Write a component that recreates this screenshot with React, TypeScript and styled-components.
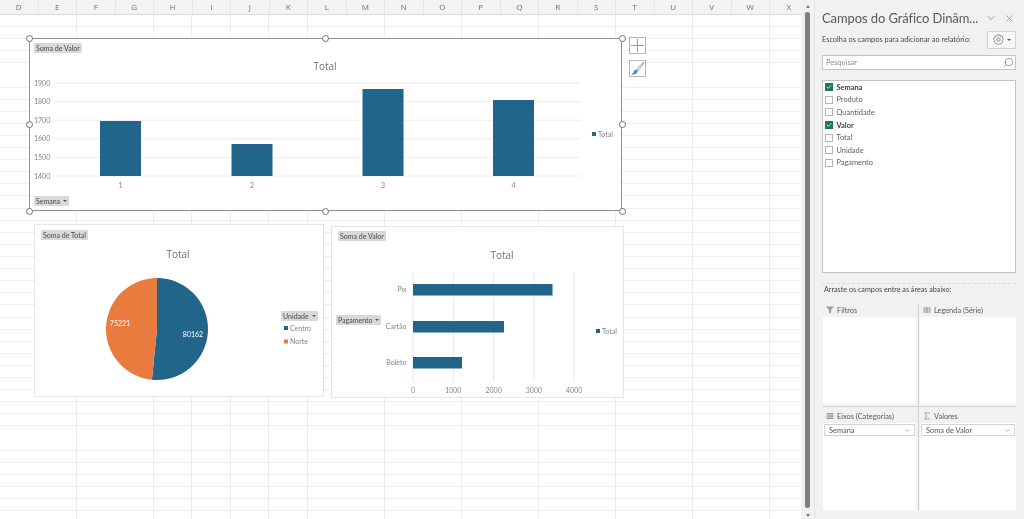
import * as React from "react";
import styled, { createGlobalStyle } from "styled-components";
import { ChevronDown, X, Search, Check } from "lucide-react";

const COLUMNS = "DEFGHIJKLMNOPQRSTUVWX".split("");
const FIELDS = [
  { name: "Semana", checked: true },
  { name: "Produto", checked: false },
  { name: "Quantidade", checked: false },
  { name: "Valor", checked: true },
  { name: "Total", checked: false },
  { name: "Unidade", checked: false },
  { name: "Pagamento", checked: false },
];
const BLUE = "#21668a";
const ORANGE = "#e97b3f";

const GlobalStyle = createGlobalStyle`
  html, body { margin: 0; padding: 0; background: #fff; }
  body { font-family: "Lato", "Open Sans", "Liberation Sans", sans-serif; overflow: hidden; }
`;

const Shell = styled.div`
  width: 1024px;
  height: 519px;
  display: flex;
  overflow: hidden;
  filter: blur(0.4px);
`;

const SheetArea = styled.div`
  width: 801px;
  display: flex;
  flex-direction: column;
`;

const ColumnBar = styled.div`
  height: 14px;
  display: flex;
  background: #f3f3f3;
  border-bottom: 1px solid #dcdcdc;
`;

const ColumnHead = styled.div`
  width: 38.5px;
  flex: none;
  text-align: center;
  font-family: "Open Sans", sans-serif;
  font-size: 8px;
  line-height: 14px;
  color: #6e6e6e;
  border-right: 1px solid #e6e6e6;
  box-sizing: border-box;
`;

const Grid = styled.div`
  flex: 1;
  position: relative;
  background-color: #fff;
  background-image:
    repeating-linear-gradient(to right, transparent 0 37.5px, #ededed 37.5px 38.5px),
    repeating-linear-gradient(to bottom, transparent 0 11.1px, #ededed 11.1px 12.1px);
`;

const ChartFrame = styled.div<{ $x: number; $y: number; $w: number; $h: number; $selected?: boolean }>`
  position: absolute;
  left: ${(p) => p.$x}px;
  top: ${(p) => p.$y - 15}px;
  width: ${(p) => p.$w}px;
  height: ${(p) => p.$h}px;
  background: #fff;
  box-sizing: border-box;
  border: ${(p) => (p.$selected ? "1.5px solid #8f8f8f" : "1px solid #e6e6e6")};
`;

const Plot = styled.svg`
  position: absolute;
  left: -1px;
  top: -1px;
  overflow: visible;
`;

const Title = styled.text`
  font-family: "Open Sans", "Noto Sans", sans-serif;
  font-size: 10px;
  font-weight: 500;
  fill: #6f6f6f;
  text-anchor: middle;
`;

const AxisLabel = styled.text<{ $anchor?: string }>`
  font-family: "Lato", "Open Sans", sans-serif;
  font-size: 7px;
  fill: #858585;
  text-anchor: ${(p) => p.$anchor || "middle"};
`;

const SliceLabel = styled.text`
  font-family: "Lato", "Open Sans", sans-serif;
  font-size: 7px;
  fill: #fff;
  text-anchor: middle;
`;

const PivotButton = styled.div<{ $x: number; $y: number }>`
  position: absolute;
  left: ${(p) => p.$x}px;
  top: ${(p) => p.$y}px;
  height: 10px;
  padding: 0 2px;
  display: flex;
  align-items: center;
  gap: 3px;
  background: #d9d9d9;
  color: #4a4a4a;
  font-family: "Lato", "Open Sans", sans-serif;
  font-size: 7px;
  line-height: 10px;
  white-space: nowrap;
`;

const Caret = styled.span`
  width: 0;
  height: 0;
  border-left: 2px solid transparent;
  border-right: 2px solid transparent;
  border-top: 2.5px solid #555;
`;

const Handle = styled.span<{ $x: number; $y: number }>`
  position: absolute;
  left: ${(p) => p.$x - 3.5}px;
  top: ${(p) => p.$y - 3.5}px;
  width: 7px;
  height: 7px;
  box-sizing: border-box;
  border-radius: 50%;
  background: #fff;
  border: 1.5px solid #707070;
`;

const ChartTool = styled.div<{ $y: number }>`
  position: absolute;
  left: 629px;
  top: ${(p) => p.$y}px;
  width: 17px;
  height: 17px;
  box-sizing: border-box;
  background: #fff;
  border: 1px solid #b5b5b5;
  display: flex;
  align-items: center;
  justify-content: center;
`;

const Scrollbar = styled.div`
  width: 13px;
  background: #f1f1f1;
  display: flex;
  flex-direction: column;
  align-items: center;
  padding: 5px 3px 0 3px;
  box-sizing: border-box;
`;

const ScrollArrow = styled.span<{ $down?: boolean }>`
  width: 0;
  height: 0;
  border-left: 2.5px solid transparent;
  border-right: 2.5px solid transparent;
  ${(p) => (p.$down ? "border-top: 3px solid #777;" : "border-bottom: 3px solid #777;")}
`;

const ScrollThumb = styled.div`
  width: 5px;
  height: 496px;
  margin: 4px 0 6px;
  background: #7f7f7f;
  border-radius: 2px;
`;

const Panel = styled.aside`
  width: 210px;
  box-sizing: border-box;
  background: #f1f1f1;
  border-left: 1px solid #e2e2e2;
  padding: 7px 8px 9px 7px;
  display: flex;
  flex-direction: column;
`;

const PanelHeader = styled.div`
  height: 22px;
  display: flex;
  align-items: center;
  justify-content: space-between;
  color: #666;
`;

const PanelTitle = styled.h1`
  margin: 0;
  font-size: 13px;
  font-weight: 400;
  letter-spacing: -0.1px;
  color: #595959;
  white-space: nowrap;
`;

const HeaderIcons = styled.div`
  display: flex;
  gap: 7px;
  align-items: center;
  margin-right: 1px;
`;

const ChooseRow = styled.div`
  height: 19px;
  margin-top: 1px;
  display: flex;
  align-items: center;
  justify-content: space-between;
`;

const SmallText = styled.span`
  font-size: 7.4px;
  font-weight: 400;
  color: #484848;
  white-space: nowrap;
`;

const GearButton = styled.div`
  width: 29px;
  height: 18px;
  box-sizing: border-box;
  background: #f7f7f7;
  border: 1px solid #d2d2d2;
  display: flex;
  align-items: center;
  justify-content: center;
  gap: 3px;
`;

const SearchBox = styled.div`
  height: 15px;
  margin-top: 6px;
  padding: 0 1px 0 3px;
  background: #fff;
  border: 1px solid #c4c4c4;
  box-sizing: border-box;
  display: flex;
  align-items: center;
  justify-content: space-between;
  font-size: 7.4px;
  color: #8a8a8a;
`;

const FieldList = styled.ul`
  list-style: none;
  margin: 10px 0 0;
  padding: 0 2px;
  height: 193px;
  box-sizing: border-box;
  background: #fff;
  border: 1px solid #c4c4c4;
`;

const FieldRow = styled.li<{ $checked: boolean }>`
  height: 12.6px;
  display: flex;
  align-items: center;
  gap: 3.5px;
  font-size: 7.4px;
  font-weight: ${(p) => (p.$checked ? 700 : 400)};
  color: ${(p) => (p.$checked ? "#3c3c3c" : "#5e5e5e")};
`;

const CheckBox = styled.span<{ $checked: boolean }>`
  width: 8px;
  height: 8px;
  flex: none;
  box-sizing: border-box;
  display: flex;
  align-items: center;
  justify-content: center;
  background: ${(p) => (p.$checked ? "#217a4e" : "#fff")};
  border: 1px solid ${(p) => (p.$checked ? "#217a4e" : "#b4b4b4")};
`;

const DashedRule = styled.div`
  margin-top: 10px;
  border-top: 1px dashed #dcdcdc;
`;

const DragHint = styled(SmallText)`
  margin: 0 0 0 2px;
  font-size: 7.2px;
  line-height: 12px;
`;

const Areas = styled.div`
  margin: 8px 0 0 1px;
  display: grid;
  grid-template-columns: 95px 98px;
  grid-template-rows: 102px 1fr;
  flex: 1;
`;

const AreaCell = styled.section<{ $right?: boolean; $lower?: boolean }>`
  display: flex;
  flex-direction: column;
  box-sizing: border-box;
  min-height: 0;
  padding-bottom: ${(p) => (p.$lower ? 0 : 2)}px;
  ${(p) => (p.$right ? "padding-left: 1px; border-left: 1px solid #d4d4d4;" : "padding-right: 2px;")}
  ${(p) => (p.$lower ? "border-top: 1px solid #d4d4d4; padding-top: 3px;" : "")}
`;

const AreaHeading = styled.div`
  height: 12px;
  flex: none;
  display: flex;
  align-items: center;
  gap: 3px;
  padding-left: 3px;
  font-size: 7.4px;
  color: #5a5a5a;
  white-space: nowrap;
`;

const AreaBody = styled.div`
  flex: 1;
  background: #fff;
  margin-top: 1px;
  padding: 1px 1px 0;
`;

const AreaPill = styled.div`
  height: 12px;
  box-sizing: border-box;
  padding: 0 3px 0 4px;
  background: #fff;
  border: 1px solid #d4d4d4;
  display: flex;
  align-items: center;
  justify-content: space-between;
  font-size: 7.4px;
  color: #555;
`;

const AreaIcon = styled.svg`
  width: 8px;
  height: 8px;
  flex: none;
  color: #9a9a9a;
`;

const FilterIcon = () => (
  <AreaIcon viewBox="0 0 8 8"><path d="M0 .5h8L5 4v3.5L3 6.5V4z" fill="currentColor" /></AreaIcon>
);
const LegendIcon = () => (
  <AreaIcon viewBox="0 0 8 8"><path d="M.5 1h2v6h-2zM3 1h2v6H3zM5.500 1h2v6h-2z" fill="currentColor" opacity=".75" /></AreaIcon>
);
const RowsIcon = () => (
  <AreaIcon viewBox="0 0 8 8"><path d="M.5 1h7v1.500h-7zM.5 3.200h7v1.500h-7zM.5 5.400h7v1.500h-7z" fill="currentColor" /></AreaIcon>
);
const SigmaIcon = () => (
  <AreaIcon viewBox="0 0 8 8"><path d="M6.500 1.500V1h-5l2.500 3-2.500 3h5v-.5" fill="none" stroke="currentColor" strokeWidth=".9" /></AreaIcon>
);

const GearIcon = () => (
  <svg width="11" height="11" viewBox="0 0 12 12" fill="none" stroke="#777" strokeWidth=".9">
    <path d="M4.400 1h3.200l.6 1.500 1.600-.2 1.500 3.700-1.100 1.100.5 1.500L8.500 10.700H7L6 11.500 5 10.700H3.500L1.300 8.600l.5-1.500L.7 6l1.500-3.700 1.600.2z" />
    <circle cx="6" cy="6" r="1.900" />
  </svg>
);

const BrushIcon = () => (
  <svg width="15" height="15" viewBox="0 0 15 15">
    <path d="M13.500 1 6.500 8.500l1.500 1.500L14 2z" fill="#fff" stroke="#8a8a8a" strokeWidth=".8" />
    <path d="M6 8.500c-2 .3-2 2.500-3 3.500L1 13.500c2.500.5 5.500 0 6.800-3.300z" fill="#4a90c8" />
  </svg>
);

const PlusIcon = () => (
  <svg width="13" height="13" viewBox="0 0 13 13">
    <path d="M6.500 0v13M0 6.500h13" stroke="#7fae94" strokeWidth="1" />
  </svg>
);

function ChartPlot({ w, h, children }: { w: number; h: number; children: React.ReactNode }) {
  return (
    <Plot width={w} height={h} viewBox={`0 0 ${w} ${h}`}>
      {children}
    </Plot>
  );
}

function ColumnChart() {
  const w = 593;
  const h = 173;
  const ticks = [1900, 1800, 1700, 1600, 1500, 1400];
  const bars = [
    { label: "1", x: 71, top: 83 },
    { label: "2", x: 202.5, top: 106 },
    { label: "3", x: 333.5, top: 51 },
    { label: "4", x: 464, top: 62 },
  ];
  return (
    <ChartPlot w={w} h={h}>
      <Title x={296} y={32}>Total</Title>
      {ticks.map((t, i) => {
        const y = 45 + i * 18.6;
        return (
          <g key={t}>
            <line x1={26} x2={551} y1={y} y2={y} stroke="#ececec" />
            <AxisLabel x={5} y={y + 2.5} $anchor="start">{t}</AxisLabel>
          </g>
        );
      })}
      {bars.map((b) => (
        <g key={b.label}>
          <rect x={b.x} y={b.top} width={41} height={138 - b.top} fill={BLUE} />
          <AxisLabel x={b.x + 20.5} y={149.5}>{b.label}</AxisLabel>
        </g>
      ))}
      <rect x={563} y={94} width={4} height={4} fill={BLUE} />
      <AxisLabel x={569} y={98.5} $anchor="start">Total</AxisLabel>
    </ChartPlot>
  );
}

function PieChart() {
  const w = 290;
  const h = 173;
  const cx = 123;
  const cy = 105;
  const r = 51;
  const blue = 80162 / (80162 + 75221);
  const angle = blue * Math.PI * 2;
  const ex = cx + r * Math.sin(angle);
  const ey = cy - r * Math.cos(angle);
  return (
    <ChartPlot w={w} h={h}>
      <Title x={144} y={34}>Total</Title>
      <path d={`M${cx} ${cy}L${cx} ${cy - r}A${r} ${r} 0 1 1 ${ex} ${ey}Z`} fill={BLUE} />
      <path d={`M${cx} ${cy}L${ex} ${ey}A${r} ${r} 0 0 1 ${cx} ${cy - r}Z`} fill={ORANGE} />
      <SliceLabel x={86} y={102}>75221</SliceLabel>
      <SliceLabel x={159} y={113}>80162</SliceLabel>
      <rect x={250} y={102} width={4} height={4} fill={BLUE} />
      <AxisLabel x={256} y={106.500} $anchor="start">Centro</AxisLabel>
      <rect x={250} y={115.500} width={4} height={4} fill={ORANGE} />
      <AxisLabel x={256} y={120} $anchor="start">Norte</AxisLabel>
    </ChartPlot>
  );
}

function BarChart() {
  const w = 293;
  const h = 172;
  const ticks = [0, 1000, 2000, 3000, 4000];
  const bars = [
    { label: "Pix", y: 58, end: 221.500 },
    { label: "Cartão", y: 95, end: 173 },
    { label: "Boleto", y: 131, end: 131 },
  ];
  return (
    <ChartPlot w={w} h={h}>
      <Title x={171} y={33}>Total</Title>
      {ticks.map((t, i) => {
        const x = 82 + i * 40.300;
        return (
          <g key={t}>
            <line x1={x} x2={x} y1={46} y2={155} stroke="#e8e8e8" />
            <AxisLabel x={x} y={166.500}>{t}</AxisLabel>
          </g>
        );
      })}
      {bars.map((b) => (
        <g key={b.label}>
          <rect x={82} y={b.y} width={b.end - 82} height={11.500} fill={BLUE} />
          <AxisLabel x={75.500} y={b.y + 8} $anchor="end">{b.label}</AxisLabel>
        </g>
      ))}
      <rect x={265} y={103} width={4} height={4} fill={BLUE} />
      <AxisLabel x={271} y={107.500} $anchor="start">Total</AxisLabel>
    </ChartPlot>
  );
}

export default function App() {
  const handles = [
    [29, 23], [325.500, 23], [622, 23],
    [29, 109.500], [622, 109.500],
    [29, 196], [325.500, 196], [622, 196],
  ];
  return (
    <Shell>
      <GlobalStyle />
      <SheetArea>
        <ColumnBar>
          {COLUMNS.map((c) => (
            <ColumnHead key={c}>{c}</ColumnHead>
          ))}
        </ColumnBar>
        <Grid>
          <ChartFrame $x={29} $y={38} $w={593} $h={173} $selected>
            <ColumnChart />
            <PivotButton $x={4} $y={4}>Soma de Valor</PivotButton>
            <PivotButton $x={4} $y={157}>Semana <Caret /></PivotButton>
          </ChartFrame>
          <ChartFrame $x={34} $y={224} $w={290} $h={173}>
            <PieChart />
            <PivotButton $x={6} $y={5}>Soma de Total</PivotButton>
            <PivotButton $x={246} $y={86}>Unidade <Caret /></PivotButton>
          </ChartFrame>
          <ChartFrame $x={331} $y={226} $w={293} $h={172}>
            <BarChart />
            <PivotButton $x={6} $y={4}>Soma de Valor</PivotButton>
            <PivotButton $x={4} $y={88}>Pagamento <Caret /></PivotButton>
          </ChartFrame>
          {handles.map(([x, y]) => (
            <Handle key={`${x}-${y}`} $x={x} $y={y} />
          ))}
          <ChartTool $y={22}><PlusIcon /></ChartTool>
          <ChartTool $y={45}><BrushIcon /></ChartTool>
        </Grid>
      </SheetArea>
      <Scrollbar>
        <ScrollArrow />
        <ScrollThumb />
        <ScrollArrow $down />
      </Scrollbar>
      <Panel>
        <PanelHeader>
          <PanelTitle>Campos do Gráfico Dinâm...</PanelTitle>
          <HeaderIcons>
            <ChevronDown size={12} strokeWidth={1.2} />
            <X size={11} strokeWidth={1.2} />
          </HeaderIcons>
        </PanelHeader>
        <ChooseRow>
          <SmallText>Escolha os campos para adicionar ao relatório:</SmallText>
          <GearButton>
            <GearIcon />
            <Caret />
          </GearButton>
        </ChooseRow>
        <SearchBox>
          Pesquisar
          <Search size={11} strokeWidth={1.2} color="#555" style={{ transform: "scaleX(-1)" }} />
        </SearchBox>
        <FieldList>
          {FIELDS.map((f) => (
            <FieldRow key={f.name} $checked={f.checked}>
              <CheckBox $checked={f.checked}>
                {f.checked && <Check size={6} color="#fff" strokeWidth={3} />}
              </CheckBox>
              {f.name}
            </FieldRow>
          ))}
        </FieldList>
        <DashedRule />
        <DragHint>Arraste os campos entre as áreas abaixo:</DragHint>
        <Areas>
          <AreaCell>
            <AreaHeading><FilterIcon /> Filtros</AreaHeading>
            <AreaBody />
          </AreaCell>
          <AreaCell $right>
            <AreaHeading><LegendIcon /> Legenda (Série)</AreaHeading>
            <AreaBody />
          </AreaCell>
          <AreaCell $lower>
            <AreaHeading><RowsIcon /> Eixos (Categorias)</AreaHeading>
            <AreaBody>
              <AreaPill>Semana <ChevronDown size={7} strokeWidth={1.5} /></AreaPill>
            </AreaBody>
          </AreaCell>
          <AreaCell $right $lower>
            <AreaHeading><SigmaIcon /> Valores</AreaHeading>
            <AreaBody>
              <AreaPill>Soma de Valor <ChevronDown size={7} strokeWidth={1.5} /></AreaPill>
            </AreaBody>
          </AreaCell>
        </Areas>
      </Panel>
    </Shell>
  );
}
